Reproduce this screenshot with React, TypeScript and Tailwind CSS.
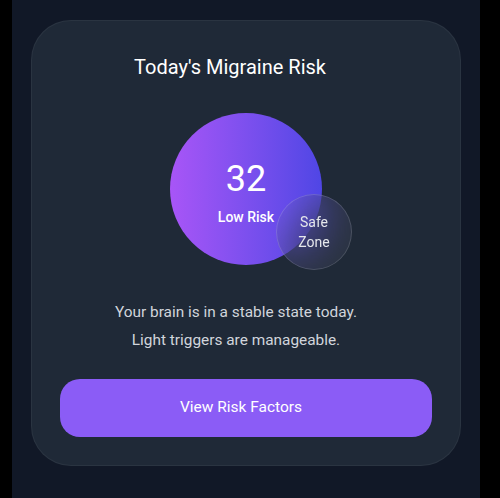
export default function App() {
  return (
    <div className="min-h-[498px] w-[500px] bg-black" style={{ fontFamily: "Roboto, sans-serif" }}>
      <div className="ml-3 min-h-[498px] w-[468px] bg-[#111827] px-[19px] pt-5">
        <div className="flex w-[430px] flex-col items-center rounded-[40px] border border-white/5 bg-[#1f2937] px-7 pb-7 pt-8">
          <h2 className="pr-8 text-xl font-normal leading-7 text-white">Today's Migraine Risk</h2>
          <div className="relative mt-8 h-[152px] w-[152px]">
            <div className="flex h-full w-full flex-col items-center justify-center rounded-full bg-gradient-to-r from-[#a855f7] to-[#4f46e5]">
              <span className="mt-2 text-4xl font-normal leading-10 text-white">32</span>
              <span className="mt-2 text-sm font-medium text-white">Low Risk</span>
            </div>
            <div className="absolute -bottom-[5px] -right-[30px] flex h-[76px] w-[76px] flex-col items-center justify-center rounded-full border border-white/15 bg-white/5 text-[14px] leading-5 text-gray-200 backdrop-blur-xl">
              <span>Safe</span>
              <span>Zone</span>
            </div>
          </div>
          <p className="mt-[33px] pr-5 text-center text-[15.4px] leading-7 text-gray-300">
            Your brain is in a stable state today.
            <br />
            Light triggers are manageable.
          </p>
          <button className="mt-[25px] h-[58px] w-full rounded-[20px] bg-[#8b5cf6] pr-[10px] text-[15.5px] text-white">
            View Risk Factors
          </button>
        </div>
      </div>
    </div>
  );
}
